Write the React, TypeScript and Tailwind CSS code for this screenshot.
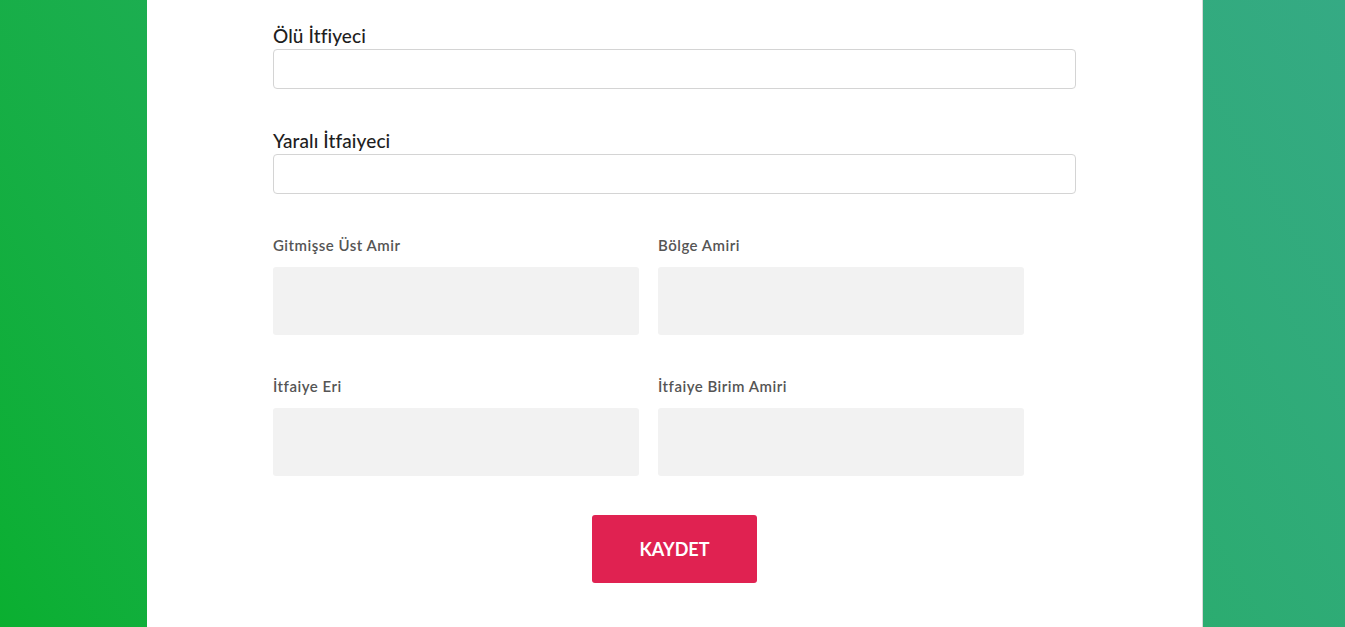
import React from 'react';

const font = { fontFamily: 'Lato, "Open Sans", sans-serif' };

const TextField = ({ label }: { label: string }) => (
  <div className="flex flex-col">
    <label className="text-[19px] leading-[24px] font-medium tracking-[0.1px] text-[#1e1e1e]">{label}</label>
    <input
      type="text"
      className="mt-[1px] h-[40px] w-full rounded-[4px] border border-[#d4d4d4] bg-white px-3 outline-none"
    />
  </div>
);

const SelectBox = ({ label }: { label: string }) => (
  <div className="flex flex-col">
    <label className="text-[15px] leading-[20px] font-semibold tracking-[0.5px] text-[#555]">{label}</label>
    <div className="mt-[12px] h-[68px] w-[366px] rounded-[3px] bg-[#f2f2f2]" />
  </div>
);

export default function App() {
  return (
    <div
      className="flex h-[627px] w-full overflow-hidden bg-linear-60 from-[#0aaf30] to-[#35aa84]"
      style={font}
    >
      <div className="ml-[147px] h-full w-[1056px] border-r border-[#d8d8d8] bg-white">
        <div className="ml-[126px] flex w-[803px] flex-col pt-[24px]">
          <TextField label="Ölü İtfiyeci" />
          <div className="mt-[40px]">
            <TextField label="Yaralı İtfaiyeci" />
          </div>

          <div className="mt-[41px] flex gap-[19px]">
            <SelectBox label="Gitmişse Üst Amir" />
            <SelectBox label="Bölge Amiri" />
          </div>
          <div className="mt-[41px] flex gap-[19px]">
            <SelectBox label="İtfaiye Eri" />
            <SelectBox label="İtfaiye Birim Amiri" />
          </div>

          <div className="mt-[39px] flex justify-center">
            <button className="h-[68px] w-[165px] rounded-[3px] bg-[#e02251] text-[18px] font-bold text-white">
              KAYDET
            </button>
          </div>
        </div>
      </div>
    </div>
  );
}
